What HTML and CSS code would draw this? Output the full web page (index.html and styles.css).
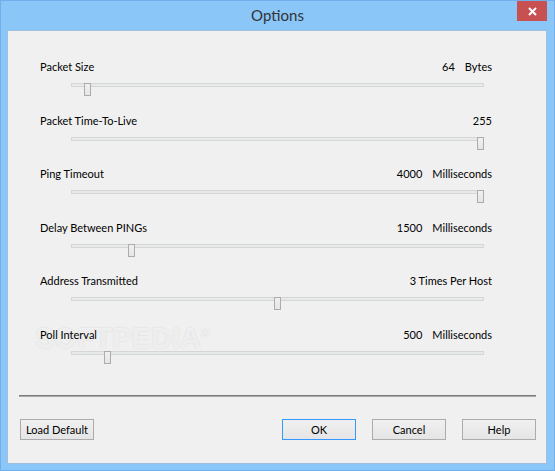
FILE: index.html
```html
<!DOCTYPE html>
<html lang="en">
<head>
  <meta charset="UTF-8">
  <title>Options</title>
  <link rel="stylesheet" href="styles.css">
</head>
<body>
  <div class="window">
    <div class="titlebar">
      <span></span>
      <span class="title">Options</span>
      <button class="close-button" aria-label="Close">
        <svg width="9" height="9" viewBox="0 0 9 9">
          <path d="M1 1 L8 8 M8 1 L1 8" stroke="#fff" stroke-width="2" fill="none"/>
        </svg>
      </button>
    </div>

    <div class="client">
      <div class="watermark">SOFTPEDIA<sup>®</sup></div>

      <div class="settings">
        <div class="row">
          <div class="row-head">
            <span>Packet Size</span>
            <span class="value"><span>64</span><span>Bytes</span></span>
          </div>
          <div class="slider"><div class="track"></div><div class="thumb" style="left: 13px"></div></div>
        </div>

        <div class="row">
          <div class="row-head">
            <span>Packet Time-To-Live</span>
            <span class="value"><span>255</span></span>
          </div>
          <div class="slider"><div class="track"></div><div class="thumb" style="left: 406px"></div></div>
        </div>

        <div class="row">
          <div class="row-head">
            <span>Ping Timeout</span>
            <span class="value"><span>4000</span><span>Milliseconds</span></span>
          </div>
          <div class="slider"><div class="track"></div><div class="thumb" style="left: 406px"></div></div>
        </div>

        <div class="row">
          <div class="row-head">
            <span>Delay Between PINGs</span>
            <span class="value"><span>1500</span><span>Milliseconds</span></span>
          </div>
          <div class="slider"><div class="track"></div><div class="thumb" style="left: 57px"></div></div>
        </div>

        <div class="row">
          <div class="row-head">
            <span>Address Transmitted</span>
            <span class="value"><span>3 Times Per Host</span></span>
          </div>
          <div class="slider"><div class="track"></div><div class="thumb" style="left: 203px"></div></div>
        </div>

        <div class="row">
          <div class="row-head">
            <span>Poll Interval</span>
            <span class="value"><span>500</span><span>Milliseconds</span></span>
          </div>
          <div class="slider"><div class="track"></div><div class="thumb" style="left: 33px"></div></div>
        </div>
      </div>

      <div class="separator"></div>

      <div class="footer">
        <button class="btn">Load Default</button>
        <div class="footer-right">
          <button class="btn btn-default">OK</button>
          <button class="btn">Cancel</button>
          <button class="btn">Help</button>
        </div>
      </div>
    </div>
  </div>
</body>
</html>
```

FILE: styles.css
```css
body {
  margin: 0;
  font-family: Lato, "Liberation Sans", Arial, sans-serif;
  font-size: 11px;
  color: #000;
}

.window {
  width: 555px;
  height: 471px;
  box-sizing: border-box;
  background: #8ac6f8;
  border: 1px solid #70afec;
  display: flex;
  flex-direction: column;
}

.titlebar {
  height: 29px;
  display: grid;
  grid-template-columns: 1fr auto 1fr;
}

.title {
  font-size: 15px;
  line-height: 29px;
  color: #333;
}

.close-button {
  justify-self: end;
  align-self: start;
  width: 30px;
  height: 20px;
  margin-right: 7px;
  padding: 0;
  border: none;
  background: #c75050;
  display: flex;
  align-items: center;
  justify-content: center;
}

.client {
  flex: 1;
  position: relative;
  margin: 0 7px 6px 6px;
  background: #f0f0f0;
  border: 1px solid #9fbfdf;
}

/* sits above the watermark so the labels stay dark */
.settings {
  position: relative;
  z-index: 1;
  padding: 28px 54px 0 32px;
}

.row {
  height: 53.6px;
}

.row-head {
  display: flex;
  justify-content: space-between;
  height: 16px;
  line-height: 16px;
}

.value {
  display: flex;
  gap: 10px;
}

.slider {
  position: relative;
  width: 413px;
  height: 13px;
  margin: 8px 0 0 31px;
}

.track {
  height: 4px;
  margin-top: 5px;
  box-sizing: border-box;
  background: #e7eaea;
  border: 1px solid #d6d6d6;
}

.thumb {
  position: absolute;
  top: 0;
  width: 7px;
  height: 13px;
  box-sizing: border-box;
  background: linear-gradient(#f0f0f0, #e5e5e5);
  border: 1px solid #acacac;
}

.separator {
  height: 2px;
  margin: 14px 10px 0 11px;
  box-sizing: border-box;
  border-top: 1px solid #7d7d7d;
  border-bottom: 1px solid #a8a8a8;
}

.footer {
  display: flex;
  padding: 22px 10px 0 12px;
}

.footer-right {
  display: flex;
  gap: 16px;
  margin-left: auto;
}

.btn {
  width: 74px;
  height: 21px;
  padding: 0;
  font-family: inherit;
  font-size: 11px;
  color: #000;
  background: linear-gradient(#f0f0f0, #e5e5e5);
  border: 1px solid #acacac;
}

.btn-default {
  border-color: #3399ff;
}

.watermark {
  position: absolute;
  left: 27px;
  top: 288px;
  font-family: "Liberation Sans", Arial, sans-serif;
  font-weight: bold;
  font-size: 29px;
  line-height: 29px;
  color: rgba(255, 255, 255, 0.6);
  text-shadow: 0 0 2px rgba(0, 0, 0, 0.12);
  pointer-events: none;
}

.watermark sup {
  font-size: 12px;
}
```
